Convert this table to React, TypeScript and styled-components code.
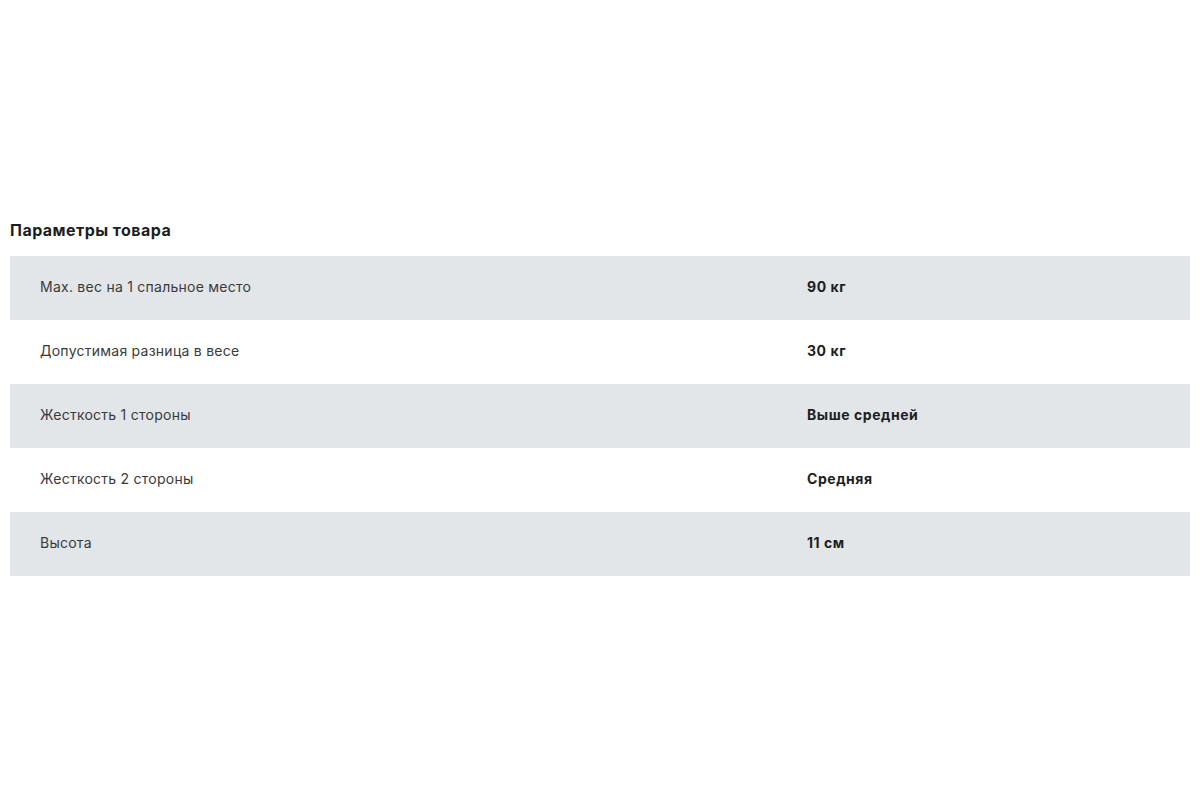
import React from "react";
import styled, { createGlobalStyle } from "styled-components";

const GlobalStyle = createGlobalStyle`
  body {
    margin: 0;
    background: #ffffff;
    font-family: Inter, "Open Sans", sans-serif;
    color: #222;
  }
`;

const Section = styled.section`
  padding: 220px 10px 0;
`;

const Title = styled.h2`
  margin: 0 0 15px;
  font-size: 16px;
  line-height: 21px;
  font-weight: 700;
  letter-spacing: 0.45px;
  color: #1e1e1e;
`;

const Table = styled.div`
  display: flex;
  flex-direction: column;
`;

const Row = styled.div<{ $shaded: boolean }>`
  display: grid;
  grid-template-columns: 65% 35%;
  align-items: center;
  height: 64px;
  box-sizing: border-box;
  padding-bottom: 3px;
  background: ${(p) => (p.$shaded ? "#e2e6e8" : "#ffffff")};
`;

const Label = styled.div`
  padding-left: 30px;
  font-size: 14px;
  letter-spacing: 0.25px;
  color: #3a3a3a;
  font-weight: 400;
`;

const Value = styled.div`
  padding-left: 30px;
  font-size: 14px;
  font-weight: 700;
  letter-spacing: 0.55px;
  color: #1e1e1e;
`;

const params = [
  { label: "Max. вес на 1 спальное место", value: "90 кг" },
  { label: "Допустимая разница в весе", value: "30 кг" },
  { label: "Жесткость 1 стороны", value: "Выше средней" },
  { label: "Жесткость 2 стороны", value: "Средняя" },
  { label: "Высота", value: "11 см" },
];

const App = () => {
  return (
    <>
      <GlobalStyle />
      <Section>
        <Title>Параметры товара</Title>
        <Table>
          {params.map((p, i) => (
            <Row key={p.label} $shaded={i % 2 === 0}>
              <Label>{p.label}</Label>
              <Value>{p.value}</Value>
            </Row>
          ))}
        </Table>
      </Section>
    </>
  );
};

export default App;
